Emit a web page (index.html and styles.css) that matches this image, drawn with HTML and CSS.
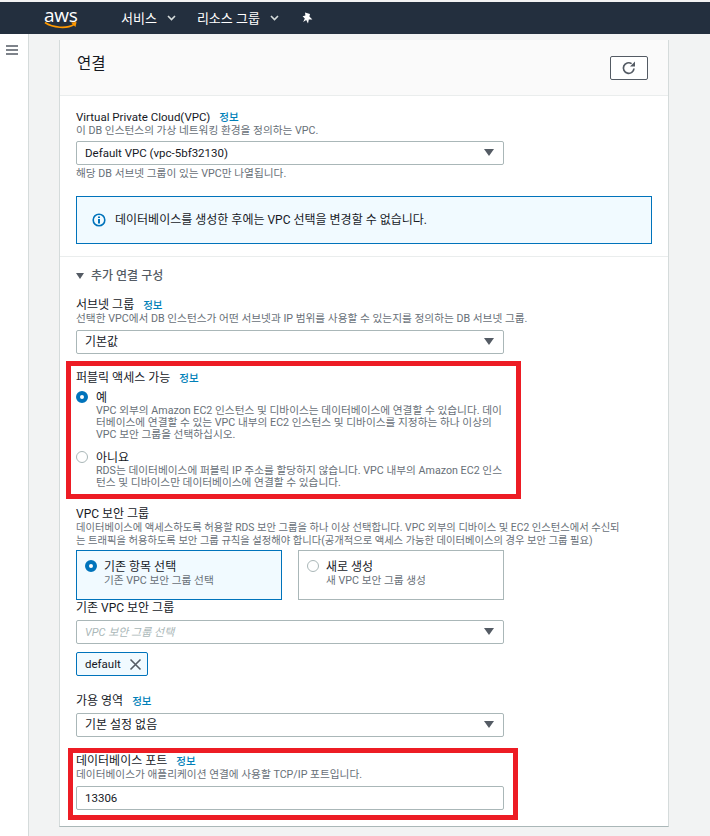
FILE: index.html

```html
<!DOCTYPE html>
<html lang="ko">
 <head>
  <meta charset="UTF-8">
  <title>연결</title>
  <link rel="stylesheet" href="styles.css">
 </head>
 <body>
  <nav class="topbar">
   <div class="logo">
    <span class="logo-text">aws</span>
    <svg class="logo-smile" width="34" height="9" viewBox="0 0 34 9"><path d="M1 1.5C9 7 23 8 30 3.5" fill="none" stroke="#f90" stroke-width="1.6"/><path d="M27 1.5L32.5 1L31.5 6Z" fill="#f90"/></svg>
   </div>
   <a class="menu menu-services">서비스 <svg class="caret" width="9" height="6" viewBox="0 0 9 6"><path d="M1 1L4.5 4.5L8 1" fill="none" stroke="#d5dbdb" stroke-width="1.6"/></svg></a>
   <a class="menu menu-groups">리소스 그룹 <svg class="caret" width="9" height="6" viewBox="0 0 9 6"><path d="M1 1L4.5 4.5L8 1" fill="none" stroke="#d5dbdb" stroke-width="1.6"/></svg></a>
   <svg class="pin" width="11" height="12" viewBox="0 0 11 12"><path d="M3 .5L8 2L7.4 4.6L10.4 7.4L6.8 7.6L6 11.5L4.2 8L1.2 10L2.8 6.4L.6 4.2L3.4 3.6Z" fill="#fff"/></svg>
  </nav>
  <div class="layout">
   <aside class="sidebar">
    <svg width="12" height="10" viewBox="0 0 12 10"><path d="M0 1H12M0 5H12M0 9H12" stroke="#545b64" stroke-width="1.6"/></svg>
   </aside>
   <main class="content">
    <section class="card">
     <header class="card-head">
      <h2>연결</h2>
      <button class="refresh">
       <svg width="16" height="16" viewBox="0 0 16 16"><path d="M13 8.5A5.3 5.3 0 1 1 10.6 3.6" fill="none" stroke="#545b64" stroke-width="1.7"/><path d="M14 1.5V6.5H9Z" fill="#545b64"/></svg>
      </button>
     </header>
     <div class="section section-vpc">
      <div class="label"><span class="latin">Virtual Private Cloud(VPC)</span> <a class="info">정보</a></div>
      <div class="desc">이 DB 인스턴스의 가상 네트워킹 환경을 정의하는 VPC.</div>
      <div class="select vpc-select"><span class="latin">Default VPC (vpc-5bf32130)</span><i class="arrow"></i></div>
      <div class="desc hint">해당 DB 서브넷 그룹이 있는 VPC만 나열됩니다.</div>
      <div class="alert">
       <svg width="14" height="14" viewBox="0 0 14 14"><circle cx="7" cy="7" r="5.8" fill="none" stroke="#0073bb" stroke-width="1.6"/><path d="M7 6V10.4M7 3.4V5" stroke="#0073bb" stroke-width="2"/></svg>
       <span>데이터베이스를 생성한 후에는 VPC 선택을 변경할 수 없습니다.</span>
      </div>
     </div>
     <div class="section section-more">
      <div class="expander"><i class="arrow"></i>추가 연결 구성</div>

      <div class="label">서브넷 그룹 <a class="info">정보</a></div>
      <div class="desc">선택한 VPC에서 DB 인스턴스가 어떤 서브넷과 IP 범위를 사용할 수 있는지를 정의하는 DB 서브넷 그룹.</div>
      <div class="select">기본값<i class="arrow"></i></div>

      <div class="field-public">
       <div class="label">퍼블릭 액세스 가능 <a class="info">정보</a></div>
       <div class="radio-row">
        <i class="radio on"></i>
        <div>
         <div class="label">예</div>
         <div class="desc tight">VPC 외부의 Amazon EC2 인스턴스 및 디바이스는 데이터베이스에 연결할 수 있습니다. 데이터베이스에 연결할 수 있는 VPC 내부의 EC2 인스턴스 및 디바이스를 지정하는 하나 이상의 VPC 보안 그룹을 선택하십시오.</div>
        </div>
       </div>
       <div class="radio-row radio-no">
        <i class="radio"></i>
        <div>
         <div class="label">아니요</div>
         <div class="desc tight">RDS는 데이터베이스에 퍼블릭 IP 주소를 할당하지 않습니다. VPC 내부의 Amazon EC2 인스턴스 및 디바이스만 데이터베이스에 연결할 수 있습니다.</div>
        </div>
       </div>
      </div>

      <div class="field-sg">
       <div class="label">VPC 보안 그룹</div>
       <div class="desc sg-desc">데이터베이스에 액세스하도록 허용할 RDS 보안 그룹을 하나 이상 선택합니다. VPC 외부의 디바이스 및 EC2 인스턴스에서 수신되는 트래픽을 허용하도록 보안 그룹 규칙을 설정해야 합니다(공개적으로 액세스 가능한 데이터베이스의 경우 보안 그룹 필요)</div>
       <div class="tiles">
        <div class="tile selected">
         <i class="radio on"></i>
         <div>
          <div class="label">기존 항목 선택</div>
          <div class="desc">기존 VPC 보안 그룹 선택</div>
         </div>
        </div>
        <div class="tile">
         <i class="radio"></i>
         <div>
          <div class="label">새로 생성</div>
          <div class="desc">새 VPC 보안 그룹 생성</div>
         </div>
        </div>
       </div>
       <div class="label">기존 VPC 보안 그룹</div>
       <div class="select placeholder">VPC 보안 그룹 선택<i class="arrow"></i></div>
       <div class="token"><span class="latin">default</span>
        <svg width="13" height="13" viewBox="0 0 13 13"><path d="M1.5 1.5L11.5 11.5M11.5 1.5L1.5 11.5" stroke="#545b64" stroke-width="1.6"/></svg>
       </div>
      </div>

      <div class="field-az">
       <div class="label">가용 영역 <a class="info">정보</a></div>
       <div class="select">기본 설정 없음<i class="arrow"></i></div>
      </div>

      <div class="field-port">
       <div class="label">데이터베이스 포트 <a class="info">정보</a></div>
       <div class="desc">데이터베이스가 애플리케이션 연결에 사용할 TCP/IP 포트입니다.</div>
       <div class="select"><span class="latin">13306</span></div>
      </div>
     </div>
    </section>
   </main>
  </div>
  <div class="mark mark-public"></div>
  <div class="mark mark-port"></div>
 </body>
</html>
```

FILE: styles.css

```css
html, body {
	margin: 0;
	padding: 0;
	height: 836px;
	overflow: hidden;
}
body {
	position: relative;
	background: #f2f3f3;
	color: #16191f;
	font-family: Roboto, "Noto Sans CJK KR", sans-serif;
	font-size: 12px;
	line-height: 15px;
}
.latin {
	font-size: 11.5px;
}

/* top bar */
.topbar {
	display: flex;
	align-items: center;
	height: 32px;
	margin-top: 2px;
	background: #232f3e;
	color: #fff;
	box-shadow: 0 -2px 0 #f2f3f3;
}
.logo {
	position: relative;
	width: 34px;
	height: 26px;
	margin-left: 44px;
}
.logo-text {
	font-family: "Open Sans", sans-serif;
	font-size: 19px;
	line-height: 20px;
	letter-spacing: -.3px;
}
.logo-smile {
	position: absolute;
	left: 0;
	top: 16px;
}
.menu {
	display: flex;
	align-items: center;
	gap: 10px;
	font-size: 13px;
}
.menu-services { margin-left: 43px; }
.menu-groups { margin-left: 21px; }
.pin { margin-left: 23px; }

.layout {
	display: flex;
	height: 802px;
}
.sidebar {
	box-sizing: border-box;
	width: 29px;
	padding: 11px 0 0 6px;
	background: #fff;
	border-right: 1px solid #d5dbdb;
}
.sidebar svg { display: block; }
.content {
	padding: 6px 0 0 30px;
}

/* card */
.card {
	box-sizing: border-box;
	width: 610px;
	height: 787px;
	background: #fff;
	border-left: 1px solid #d5dbdb;
	border-right: 1px solid #d5dbdb;
	border-bottom: 1px solid #aab7b8;
}
.card-head {
	display: flex;
	align-items: center;
	justify-content: space-between;
	box-sizing: border-box;
	height: 56px;
	padding: 0 20px 0 17px;
	background: #fafafa;
	border-bottom: 1px solid #eaeded;
}
.card-head h2 {
	margin: 0 0 7px;
	font-size: 15.5px;
	font-weight: 400;
	line-height: 20px;
}
.refresh {
	display: flex;
	align-items: center;
	justify-content: center;
	box-sizing: border-box;
	width: 38px;
	height: 24px;
	padding: 0;
	background: #fff;
	border: 1px solid #545b64;
	border-radius: 2px;
}

.section {
	padding: 0 16px;
}
.section-vpc {
	box-sizing: border-box;
	height: 161px;
	padding-top: 13px;
	border-bottom: 1px solid #eaeded;
}
.section-more {
	padding-top: 12px;
}

.label {
	height: 15px;
	color: #16191f;
	line-height: 17px;
}
.desc {
	color: #687078;
	font-size: 10.7px;
	line-height: 13px;
}
.tight {
	line-height: 12px;
}
.info {
	margin-left: 6px;
	color: #0080b8;
	font-size: 10.5px;
	font-weight: 500;
}
.hint { margin-top: 2px; }

.select {
	position: relative;
	box-sizing: border-box;
	width: 428px;
	height: 24px;
	margin-top: 5px;
	padding: 3.5px 8px;
	background: #fff;
	border: 1px solid #aab7b8;
	border-radius: 2px;
}
.vpc-select { margin-top: 4px; }
.placeholder {
	color: #aab7b8;
	font-style: italic;
	font-size: 11px;
}
.arrow {
	display: block;
	width: 0;
	height: 0;
	border-style: solid;
	border-width: 7px 5px 0;
	border-color: #545b64 transparent transparent;
}
.select .arrow {
	position: absolute;
	right: 9px;
	top: 7px;
}

.alert {
	display: flex;
	align-items: center;
	gap: 9px;
	box-sizing: border-box;
	width: 576px;
	height: 48px;
	margin-top: 16px;
	padding-left: 15px;
	background: #f1faff;
	border: 1px solid #0073bb;
}

.expander {
	display: flex;
	align-items: center;
	gap: 7px;
	height: 14px;
	margin-bottom: 14px;
	color: #545b64;
	font-weight: 500;
}
.expander .arrow {
	border-width: 6px 4.5px 0;
}

.field-public { margin-top: 16px; }
.radio-row {
	display: flex;
	gap: 8px;
	width: 428px;
	margin-top: 5px;
}
.radio-no { margin-top: 9px; }
.radio {
	flex: none;
	box-sizing: border-box;
	width: 12px;
	height: 12px;
	margin-top: 1px;
	background: #fff;
	border: 1px solid #aab7b8;
	border-radius: 50%;
}
.radio.on {
	border: 4px solid #0073bb;
}

.field-sg { margin-top: 17px; }
.sg-desc {
	width: 552px;
	font-size: 10.3px;
}
.tiles {
	display: flex;
	gap: 16px;
	width: 428px;
	margin-top: 3px;
}
.tile {
	display: flex;
	gap: 7px;
	flex: 1;
	box-sizing: border-box;
	height: 50px;
	padding: 8px;
	background: #fff;
	border: 1px solid #aab7b8;
}
.tile.selected {
	background: #f1faff;
	border-color: #0073bb;
}
.token {
	display: flex;
	align-items: center;
	gap: 8px;
	box-sizing: border-box;
	width: 72px;
	height: 24px;
	margin-top: 8px;
	padding-left: 8px;
	background: #f1faff;
	border: 1px solid #0073bb;
	border-radius: 2px;
}

.field-az { margin-top: 17px; }
.field-port { margin-top: 16px; }

/* red marks drawn over the form */
.mark {
	position: absolute;
	box-sizing: border-box;
	border: 5px solid #ed1c24;
}
.mark-public {
	left: 66px;
	top: 361px;
	width: 455px;
	height: 138px;
}
.mark-port {
	left: 68px;
	top: 748px;
	width: 450px;
	height: 72px;
}
```
